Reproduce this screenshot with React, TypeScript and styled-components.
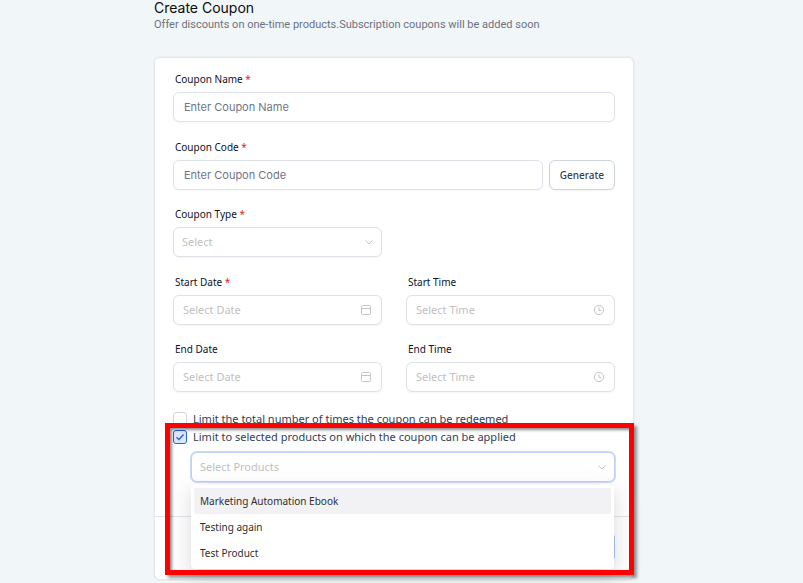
import React, { useState } from "react";
import styled, { createGlobalStyle, css } from "styled-components";

const system = `"Noto Sans", "Segoe UI", sans-serif`;

const GlobalStyle = createGlobalStyle`
  *, *::before, *::after { box-sizing: border-box; }
  body {
    margin: 0;
    background: #f1f6f9;
    font-family: Inter, sans-serif;
    font-size: 11px;
    line-height: 18px;
  }
  button, input { font: inherit; }
`;

const Page = styled.main`
  padding: 0 15px 4px 0;
`;

const Content = styled.div`
  max-width: 480px;
  margin: 0 auto;
`;

const Title = styled.h1`
  margin: 0;
  color: #0b0b0c;
  font-size: 14px;
  font-weight: 400;
  line-height: 16px;
`;

const Subtitle = styled.p`
  margin: 0;
  padding-bottom: 23px;
  color: #6b7280;
  font-family: Roboto, Arial, sans-serif;
  font-size: 11px;
`;

const Card = styled.form`
  border: 1px solid #e5e9ef;
  border-radius: 6px;
  background: #fff;
  box-shadow: 0 0 0 1px #ebeff4;
`;

const Fields = styled.div`
  display: flex;
  flex-direction: column;
  gap: 15px;
  padding: 12px 18px 0;
`;

const FieldGroup = styled.div`
  display: flex;
  flex-direction: column;
  gap: 16px;
`;

const Columns = styled.div`
  display: grid;
  grid-template-columns: 1fr 1fr;
  column-gap: 24px;
`;

const Field = styled.div`
  display: flex;
  flex-direction: column;
  gap: 4px;
`;

const Label = styled.label`
  padding-left: 2px;
  color: #0d1226;
  font-family: ${system};
  font-size: 10px;
`;

const Required = styled.span`
  color: #e02424;
`;

const control = css`
  height: 30px;
  border: 1px solid #dfe1e8;
  border-radius: 6px;
  background: #fff;
  box-shadow: 0 1px 2px rgba(0, 0, 0, 0.04);
`;

const TextInput = styled.input`
  ${control}
  flex: 1;
  width: 100%;
  min-width: 0;
  min-height: 30px;
  padding: 0 10px;
  &::placeholder { color: #6f7682; opacity: 1; }
`;

const InlineRow = styled.div`
  display: flex;
  gap: 6px;
`;

const GenerateButton = styled.button`
  ${control}
  padding: 0 10px;
  border-color: #cdd3dc;
  color: #344054;
  font-family: ${system};
  font-size: 10px;
  font-weight: 500;
`;

const PickerBox = styled.div<{ $select?: boolean; $focused?: boolean }>`
  ${control}
  display: flex;
  align-items: center;
  padding: 0 ${(p) => (p.$select ? 6 : 9)}px 0 ${(p) => (p.$select ? 8 : 9)}px;
  ${(p) => p.$focused && css`
    border-color: #c3d0f3;
    box-shadow: 0 0 0 1px #cddafa;
  `}
`;

const PickerInput = styled.input`
  flex: 1;
  width: 100%;
  min-width: 0;
  padding: 0;
  border: 0;
  outline: 0;
  background: transparent;
  font-family: ${system};
  &::placeholder { color: #bfbfbf; opacity: 1; }
`;

const Icon = styled.svg`
  flex: none;
  width: 12px;
  height: 12px;
  fill: none;
  stroke: #c4c4c4;
`;

const Limits = styled.section`
  position: relative;
  padding: 18px 18px 34px;
`;

const CheckRow = styled.label`
  display: flex;
  align-items: center;
  gap: 6px;
  color: #344054;
  font-family: ${system};
`;

const Checkbox = styled.input`
  appearance: none;
  width: 14px;
  height: 14px;
  margin: 0;
  border: 1px solid #d0d5dd;
  border-radius: 3px;
  background: #fff;
  &:checked {
    border-color: #2563eb;
    background: #dbe6fd;
  }
`;

const CheckWrap = styled.span`
  position: relative;
  display: flex;
`;

const CheckMark = styled.svg`
  position: absolute;
  inset: 0;
  width: 14px;
  height: 14px;
  fill: none;
  stroke: #2563eb;
  pointer-events: none;
`;

const ProductSelect = styled.div`
  position: relative;
  margin: 6px 0 0 18px;
`;

const Menu = styled.div`
  position: absolute;
  z-index: 2;
  top: 100%;
  left: 0;
  right: 1px;
  margin-top: 3px;
  padding: 3px;
  border-radius: 4px;
  background: #fff;
  box-shadow: 0 3px 6px -4px rgba(0, 0, 0, 0.12), 0 6px 16px rgba(0, 0, 0, 0.08), 0 9px 28px 8px rgba(0, 0, 0, 0.05);
`;

const Option = styled.button`
  display: block;
  width: 100%;
  height: 26px;
  padding: 0 6px;
  border: 0;
  border-radius: 2px;
  background: #fff;
  color: #2e2e30;
  font-family: ${system};
  font-size: 10px;
  text-align: left;
  &[aria-selected="true"] { background: #f2f2f4; }
`;

const Highlight = styled.div`
  position: absolute;
  z-index: 3;
  top: 31px;
  left: 10px;
  right: -1px;
  height: 152px;
  border: 5px solid #fe0000;
  box-shadow: 3px 3px 3px rgba(0, 0, 0, 0.4), inset 2px 2px 3px rgba(0, 0, 0, 0.45);
  pointer-events: none;
`;

const Footer = styled.footer`
  display: flex;
  justify-content: flex-end;
  padding: 18px 18px 20px;
  border-top: 1px solid #e1e4ec;
`;

const SubmitButton = styled.button`
  width: 60px;
  height: 24px;
  border: 0;
  border-radius: 2px;
  background: #b3c8fa;
`;

const Calendar = () => (
  <Icon viewBox="0 0 12 12" aria-hidden="true">
    <rect x="1.5" y="1.5" width="9" height="9" rx="1" />
    <path d="M1.5 4.5h9" />
  </Icon>
);

const Clock = () => (
  <Icon viewBox="0 0 12 12" aria-hidden="true">
    <circle cx="6" cy="6" r="4.6" />
    <path d="M6 3.2v3.2h2.4" />
  </Icon>
);

const Chevron = () => (
  <Icon viewBox="0 0 12 12" aria-hidden="true">
    <path d="m2.5 4.5 3.5 3.5 3.5-3.5" />
  </Icon>
);

type PickerProps = {
  id: string;
  label: string;
  placeholder: string;
  required?: boolean;
  select?: boolean;
  icon: React.ReactNode;
};

function PickerField({ id, label, placeholder, required, select, icon }: PickerProps) {
  return (
    <Field>
      <Label htmlFor={id}>
        {label} {required && <Required>*</Required>}
      </Label>
      <PickerBox $select={select}>
        <PickerInput id={id} role={select ? "combobox" : undefined} placeholder={placeholder} />
        {icon}
      </PickerBox>
    </Field>
  );
}

const products = ["Marketing Automation Ebook", "Testing again", "Test Product"];

export default function App() {
  const [limitTotal, setLimitTotal] = useState(false);
  const [limitProducts, setLimitProducts] = useState(true);
  const [active, setActive] = useState(0);

  return (
    <Page>
      <GlobalStyle />
      <Content>
        <Title>Create Coupon</Title>
        <Subtitle>Offer discounts on one-time products.Subscription coupons will be added soon</Subtitle>
        <Card onSubmit={(e) => e.preventDefault()}>
          <Fields>
            <FieldGroup>
              <Field>
                <Label htmlFor="name">Coupon Name <Required>*</Required></Label>
                <TextInput id="name" placeholder="Enter Coupon Name" />
              </Field>
              <Field>
                <Label htmlFor="code">Coupon Code <Required>*</Required></Label>
                <InlineRow>
                  <TextInput id="code" placeholder="Enter Coupon Code" />
                  <GenerateButton type="button">Generate</GenerateButton>
                </InlineRow>
              </Field>
            </FieldGroup>
            <FieldGroup>
              <Columns>
                <PickerField id="type" label="Coupon Type" placeholder="Select" required select icon={<Chevron />} />
              </Columns>
              <Columns>
                <PickerField id="start-date" label="Start Date" placeholder="Select Date" required icon={<Calendar />} />
                <PickerField id="start-time" label="Start Time" placeholder="Select Time" icon={<Clock />} />
              </Columns>
            </FieldGroup>
            <Columns>
              <PickerField id="end-date" label="End Date" placeholder="Select Date" icon={<Calendar />} />
              <PickerField id="end-time" label="End Time" placeholder="Select Time" icon={<Clock />} />
            </Columns>
          </Fields>
          <Limits>
            <CheckRow>
              <CheckWrap>
                <Checkbox type="checkbox" checked={limitTotal} onChange={() => setLimitTotal(!limitTotal)} />
              </CheckWrap>
              Limit the total number of times the coupon can be redeemed
            </CheckRow>
            <CheckRow>
              <CheckWrap>
                <Checkbox type="checkbox" checked={limitProducts} onChange={() => setLimitProducts(!limitProducts)} />
                {limitProducts && (
                  <CheckMark viewBox="0 0 14 14" aria-hidden="true">
                    <path d="m3.5 7.2 2.4 2.3 4.6-5" strokeWidth="1.4" />
                  </CheckMark>
                )}
              </CheckWrap>
              Limit to selected products on which the coupon can be applied
            </CheckRow>
            <ProductSelect>
              <PickerBox $select $focused>
                <PickerInput aria-label="Select Products" role="combobox" aria-expanded="true" aria-controls="products" placeholder="Select Products" />
                <Chevron />
              </PickerBox>
              <Menu id="products" role="listbox">
                {products.map((name, i) => (
                  <Option key={name} type="button" role="option" aria-selected={i === active} onClick={() => setActive(i)}>
                    {name}
                  </Option>
                ))}
              </Menu>
            </ProductSelect>
            <Highlight />
          </Limits>
          <Footer>
            <SubmitButton type="submit" aria-label="Create" />
          </Footer>
        </Card>
      </Content>
    </Page>
  );
}
